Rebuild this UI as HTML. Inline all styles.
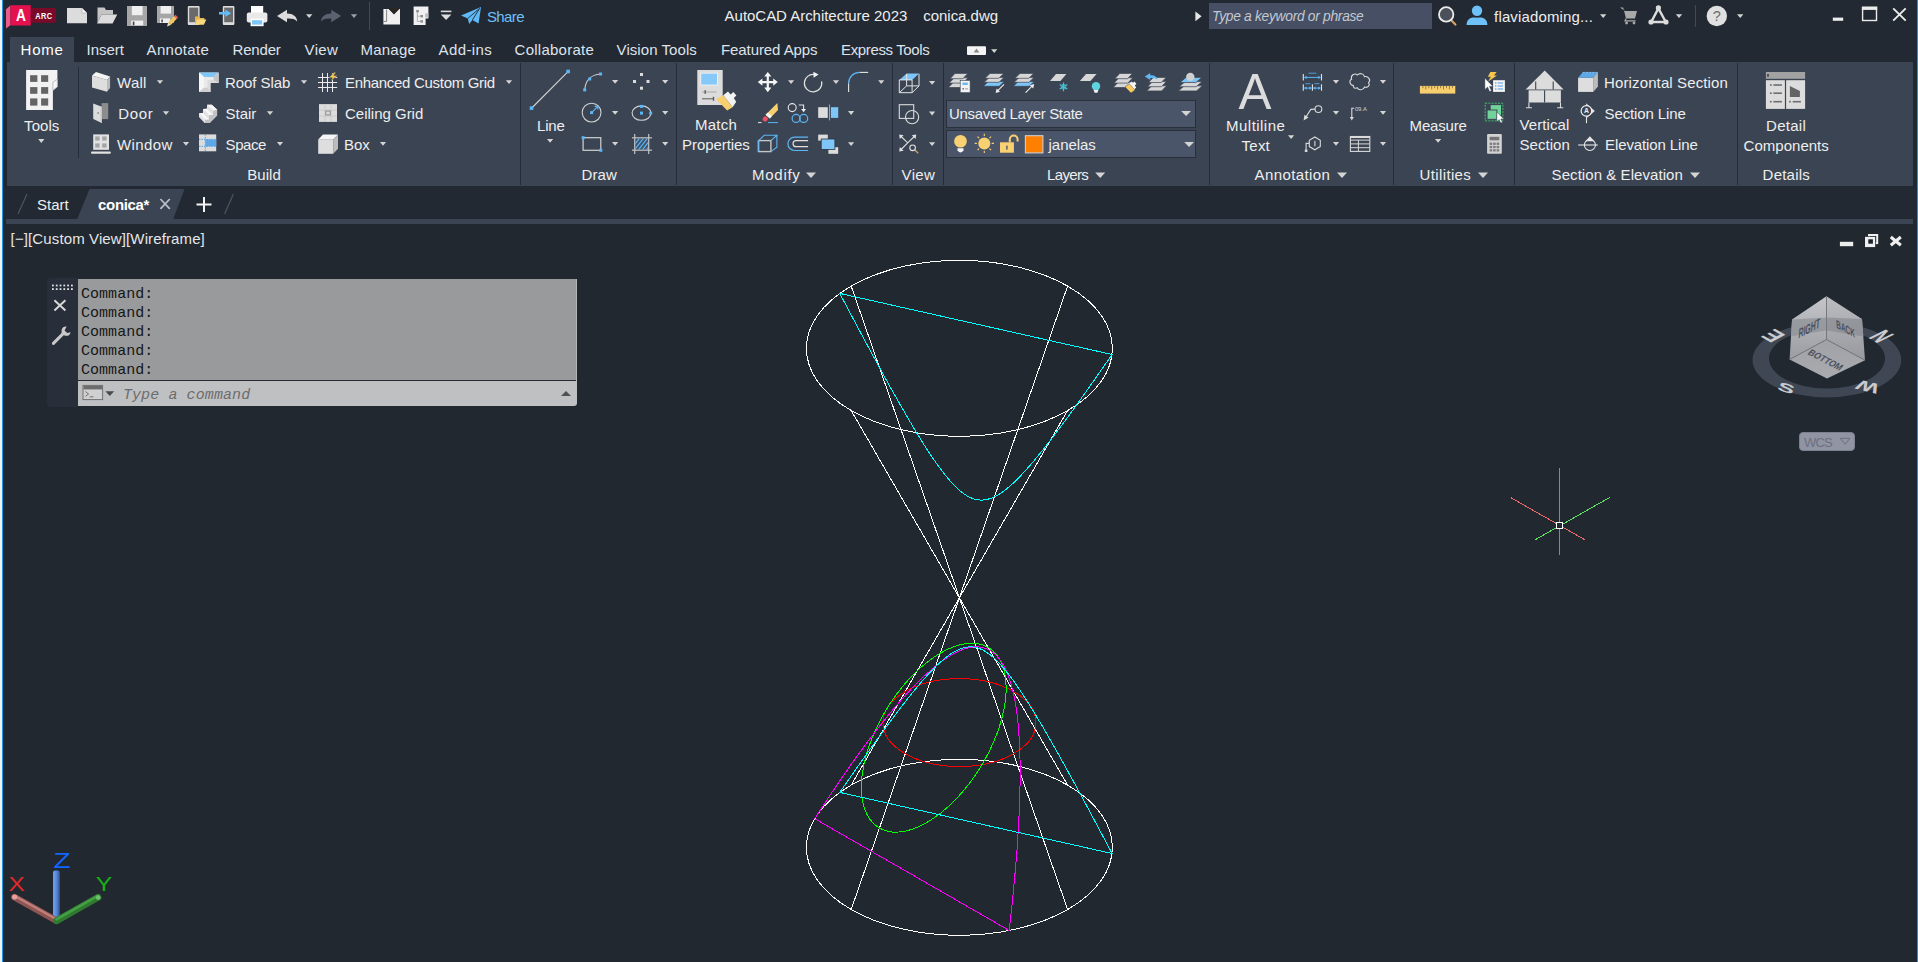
<!DOCTYPE html>
<html lang="en"><head><meta charset="utf-8"><title>AutoCAD Architecture 2023 - conica.dwg</title>
<style>
html,body{margin:0;padding:0;}
body{width:1918px;height:962px;overflow:hidden;background:#212830;position:relative;font-family:"Liberation Sans",sans-serif;}
.abs{position:absolute;}
.t{position:absolute;white-space:pre;line-height:normal;font-size:15px;}
#titlebar{left:3px;top:0;width:1914px;height:62px;background:#222933;}
#ribbon{left:7px;top:62px;width:1906px;height:124px;background:#3b4453;}
#hometab{left:10px;top:37px;width:64px;height:26px;background:#3b4453;}
#filetabs{left:3px;top:186px;width:1914px;height:33px;background:#222933;}
#tabbar{left:6px;top:219px;width:1907px;height:5px;background:#3b4453;}
#leftedge{left:0;top:0;width:2px;height:962px;background:#f3f3f3;}
#leftblue{left:2px;top:0;width:1.3px;height:962px;background:#1f96e0;}
#rightblue{left:1916.7px;top:0;width:1.3px;height:962px;background:#1896e0;}
#search{left:1209px;top:3px;width:223px;height:26px;background:#464f63;}
.sep{width:1px;background:#262c37;}
.dd{background:#4a5569;border:1px solid #2a303b;box-sizing:border-box;}
#cmdgrip{left:47px;top:278px;width:31px;height:129px;background:#282e3a;border-radius:4px 0 0 4px;}
#cmdhist{left:78px;top:279px;width:499px;height:102px;background:#999a9c;border-right:1px solid #b2b4b6;box-sizing:border-box;}
#cmdline{left:78px;top:379.7px;width:498px;height:1.3px;background:#252b35;}
#cmdin{left:78px;top:381px;width:499px;height:25px;background:#bfc0c2;border-radius:0 0 3px 0;}
#wcs{left:1799px;top:432px;width:56px;height:19px;background:#9094a3;border:1px solid #7c8090;border-radius:4px;box-sizing:border-box;}
svg{position:absolute;left:0;top:0;}
</style></head><body>
<div class="abs" id="titlebar"></div>
<div class="abs" id="hometab"></div>
<div class="abs" id="ribbon"></div>
<div class="abs" id="filetabs"></div>
<div class="abs" id="tabbar"></div>
<div class="abs" id="search"></div>
<div class="abs sep" style="left:520px;top:63px;height:122px;"></div>
<div class="abs sep" style="left:676px;top:63px;height:122px;"></div>
<div class="abs sep" style="left:892px;top:63px;height:122px;"></div>
<div class="abs sep" style="left:943px;top:63px;height:122px;"></div>
<div class="abs sep" style="left:1209px;top:63px;height:122px;"></div>
<div class="abs sep" style="left:1393px;top:63px;height:122px;"></div>
<div class="abs sep" style="left:1514px;top:63px;height:122px;"></div>
<div class="abs sep" style="left:1737px;top:63px;height:122px;"></div>
<div class="abs sep" style="left:78px;top:67px;height:91px;"></div>
<div class="abs dd" style="left:946px;top:100px;width:250px;height:28px;"></div>
<div class="abs dd" style="left:946px;top:130px;width:250px;height:28px;"></div>
<div class="abs" id="cmdgrip"></div><div class="abs" id="cmdhist"></div><div class="abs" id="cmdline"></div><div class="abs" id="cmdin"></div>
<div class="abs" id="wcs"></div>
<svg id="view" width="1918" height="962" viewBox="0 0 1918 962">
<g id="cones" shape-rendering="crispEdges">
<ellipse cx="959.4" cy="348.3" rx="153.0" ry="88.0" stroke="#ffffff" stroke-width="1" fill="none"/>
<ellipse cx="959.4" cy="847.3" rx="153.0" ry="88.0" stroke="#ffffff" stroke-width="1" fill="none"/>
<path d="M851.2,286.1 L1067.6,909.5" stroke="#ffffff" stroke-width="1" fill="none"/>
<path d="M1067.6,410.5 L851.2,785.1" stroke="#ffffff" stroke-width="1" fill="none"/>
<path d="M1067.6,286.1 L851.2,909.5" stroke="#ffffff" stroke-width="1" fill="none"/>
<path d="M851.2,410.5 L1067.6,785.1" stroke="#ffffff" stroke-width="1" fill="none"/>
<ellipse cx="959.4" cy="722.6" rx="76.5" ry="44.0" stroke="#ff0000" stroke-width="1" fill="none"/>
<path d="M988.0,647.4 L986.8,646.7 L985.5,646.1 L984.1,645.5 L982.7,645.0 L981.3,644.6 L979.9,644.2 L978.4,643.9 L976.9,643.6 L975.4,643.4 L973.8,643.3 L972.2,643.3 L970.6,643.3 L969.0,643.4 L967.3,643.5 L965.6,643.7 L963.9,644.0 L962.2,644.3 L960.4,644.7 L958.6,645.2 L956.8,645.7 L955.0,646.3 L953.2,647.0 L951.4,647.7 L949.6,648.5 L947.7,649.3 L945.8,650.2 L944.0,651.1 L942.1,652.2 L940.2,653.2 L938.3,654.4 L936.4,655.6 L934.5,656.8 L932.6,658.1 L930.7,659.5 L928.9,660.9 L927.0,662.3 L925.1,663.9 L923.2,665.4 L921.3,667.0 L919.5,668.7 L917.6,670.4 L915.8,672.2 L914.0,674.0 L912.1,675.8 L910.3,677.7 L908.6,679.6 L906.8,681.6 L905.0,683.6 L903.3,685.7 L901.6,687.7 L899.9,689.9 L898.3,692.0 L896.6,694.2 L895.0,696.4 L893.4,698.6 L891.9,700.9 L890.3,703.2 L888.8,705.5 L887.4,707.8 L885.9,710.2 L884.5,712.6 L883.2,715.0 L881.8,717.4 L880.5,719.8 L879.3,722.2 L878.0,724.7 L876.8,727.1 L875.7,729.6 L874.6,732.0 L873.5,734.5 L872.5,737.0 L871.5,739.4 L870.6,741.9 L869.7,744.4 L868.8,746.8 L868.0,749.3 L867.2,751.8 L866.5,754.2 L865.8,756.6 L865.2,759.0 L864.6,761.4 L864.1,763.8 L863.6,766.2 L863.2,768.5 L862.8,770.9 L862.4,773.2 L862.1,775.4 L861.9,777.7 L861.7,779.9 L861.6,782.1 L861.5,784.3 L861.4,786.4 L861.4,788.5 L861.5,790.6 L861.6,792.6 L861.7,794.6 L861.9,796.6 L862.2,798.5 L862.5,800.3 L862.8,802.2 L863.2,804.0 L863.7,805.7 L864.2,807.4 L864.7,809.0 L865.3,810.6 L866.0,812.2 L866.6,813.7 L867.4,815.1 L868.1,816.5 L869.0,817.8 L869.8,819.1 L870.7,820.3 L871.7,821.5 L872.7,822.6 L873.7,823.7 L874.8,824.7 L875.9,825.6 L877.1,826.5 L878.3,827.3 L879.5,828.0 L879.5,828.0 L880.8,828.7 L882.1,829.3 L883.4,829.9 L884.8,830.4 L886.2,830.8 L887.6,831.2 L889.1,831.5 L890.6,831.8 L892.2,832.0 L893.7,832.1 L895.3,832.1 L896.9,832.1 L898.6,832.0 L900.2,831.9 L901.9,831.7 L903.6,831.4 L905.4,831.1 L907.1,830.7 L908.9,830.2 L910.7,829.7 L912.5,829.1 L914.3,828.4 L916.1,827.7 L918.0,827.0 L919.8,826.1 L921.7,825.2 L923.6,824.3 L925.4,823.2 L927.3,822.2 L929.2,821.0 L931.1,819.8 L933.0,818.6 L934.9,817.3 L936.8,815.9 L938.7,814.5 L940.6,813.1 L942.5,811.5 L944.3,810.0 L946.2,808.4 L948.1,806.7 L949.9,805.0 L951.8,803.2 L953.6,801.4 L955.4,799.6 L957.2,797.7 L959.0,795.8 L960.7,793.8 L962.5,791.8 L964.2,789.7 L965.9,787.7 L967.6,785.5 L969.3,783.4 L970.9,781.2 L972.5,779.0 L974.1,776.8 L975.7,774.5 L977.2,772.2 L978.7,769.9 L980.2,767.6 L981.6,765.2 L983.0,762.8 L984.4,760.4 L985.7,758.0 L987.0,755.6 L988.3,753.2 L989.5,750.7 L990.7,748.3 L991.8,745.8 L993.0,743.4 L994.0,740.9 L995.0,738.4 L996.0,736.0 L997.0,733.5 L997.9,731.0 L998.7,728.6 L999.5,726.1 L1000.3,723.6 L1001.0,721.2 L1001.7,718.8 L1002.3,716.4 L1002.9,714.0 L1003.4,711.6 L1003.9,709.2 L1004.4,706.9 L1004.8,704.5 L1005.1,702.2 L1005.4,700.0 L1005.6,697.7 L1005.8,695.5 L1006.0,693.3 L1006.1,691.1 L1006.1,689.0 L1006.1,686.9 L1006.0,684.8 L1005.9,682.8 L1005.8,680.8 L1005.6,678.8 L1005.3,676.9 L1005.0,675.1 L1004.7,673.2 L1004.3,671.4 L1003.8,669.7 L1003.3,668.0 L1002.8,666.4 L1002.2,664.8 L1001.6,663.2 L1000.9,661.7 L1000.2,660.3 L999.4,658.9 L998.6,657.6 L997.7,656.3 L996.8,655.1 L995.8,653.9 L994.9,652.8 L993.8,651.7 L992.7,650.7 L991.6,649.8 L990.5,648.9 L989.3,648.1 L988.0,647.4 Z" stroke="#00ff00" stroke-width="1" fill="none"/>
<path d="M1009.2,930.5 L1010.1,922.2 L1011.0,914.0 L1011.9,905.9 L1012.7,897.9 L1013.5,890.0 L1014.2,882.3 L1014.9,874.7 L1015.6,867.3 L1016.2,859.9 L1016.8,852.7 L1017.3,845.6 L1017.7,838.6 L1018.2,831.8 L1018.6,825.0 L1018.9,818.4 L1019.2,812.0 L1019.5,805.6 L1019.7,799.4 L1019.9,793.3 L1020.0,787.3 L1020.1,781.5 L1020.1,775.7 L1020.1,770.1 L1020.1,764.6 L1020.0,759.3 L1019.9,754.1 L1019.7,749.0 L1019.5,744.0 L1019.2,739.1 L1018.9,734.4 L1018.6,729.8 L1018.2,725.3 L1017.8,720.9 L1017.3,716.7 L1016.8,712.6 L1016.2,708.6 L1015.6,704.8 L1015.0,701.0 L1014.3,697.4 L1013.5,693.9 L1012.8,690.6 L1011.9,687.3 L1011.1,684.2 L1010.2,681.2 L1009.2,678.4 L1008.2,675.6 L1007.2,673.0 L1006.1,670.5 L1005.0,668.2 L1003.8,665.9 L1002.6,663.8 L1001.4,661.8 L1000.1,659.9 L998.7,658.2 L997.3,656.6 L995.9,655.1 L994.4,653.7 L992.9,652.5 L991.4,651.4 L989.8,650.4 L988.1,649.5 L986.4,648.8 L984.7,648.1 L982.9,647.6 L981.1,647.3 L979.3,647.0 L977.4,646.9 L975.4,646.9 L973.4,647.0 L971.4,647.3 L969.3,647.7 L967.2,648.2 L965.1,648.8 L962.8,649.5 L960.6,650.4 L958.3,651.4 L956.0,652.5 L953.6,653.8 L951.2,655.1 L948.7,656.6 L946.2,658.3 L943.7,660.0 L941.1,661.9 L938.4,663.9 L935.7,666.0 L933.0,668.2 L930.3,670.6 L927.5,673.1 L924.6,675.7 L921.7,678.5 L918.8,681.3 L915.8,684.3 L912.8,687.4 L909.7,690.7 L906.6,694.0 L903.4,697.5 L900.2,701.2 L897.0,704.9 L893.7,708.8 L890.4,712.7 L887.0,716.9 L883.6,721.1 L880.1,725.5 L876.6,729.9 L873.1,734.6 L869.5,739.3 L865.9,744.1 L862.2,749.1 L858.5,754.2 L854.7,759.5 L850.9,764.8 L847.1,770.3 L843.2,775.9 L839.2,781.7 L835.3,787.5 L831.2,793.5 L827.2,799.6 L823.1,805.8 L818.9,812.2 L814.7,818.7 Z" stroke="#ff00ff" stroke-width="1" fill="none"/>
<path d="M839.8,293.4 L842.0,297.7 L844.3,302.0 L846.6,306.3 L848.8,310.6 L851.1,314.9 L853.4,319.1 L855.6,323.4 L857.9,327.6 L860.2,331.9 L862.5,336.1 L864.7,340.4 L867.0,344.6 L869.3,348.8 L871.5,353.0 L873.8,357.1 L876.1,361.3 L878.3,365.5 L880.6,369.6 L882.9,373.8 L885.1,377.9 L887.4,382.0 L889.7,386.1 L891.9,390.1 L894.2,394.2 L896.5,398.2 L898.8,402.2 L901.0,406.2 L903.3,410.1 L905.6,414.0 L907.8,417.9 L910.1,421.8 L912.4,425.6 L914.6,429.4 L916.9,433.2 L919.2,436.9 L921.4,440.6 L923.7,444.2 L926.0,447.8 L928.2,451.3 L930.5,454.7 L932.8,458.1 L935.1,461.4 L937.3,464.6 L939.6,467.8 L941.9,470.8 L944.1,473.8 L946.4,476.6 L948.7,479.3 L950.9,481.9 L953.2,484.4 L955.5,486.7 L957.7,488.8 L960.0,490.8 L962.3,492.6 L964.5,494.3 L966.8,495.7 L969.1,497.0 L971.4,498.0 L973.6,498.8 L975.9,499.4 L978.2,499.8 L980.4,500.0 L982.7,500.0 L985.0,499.8 L987.2,499.4 L989.5,498.7 L991.8,498.0 L994.0,497.0 L996.3,495.8 L998.6,494.5 L1000.8,493.1 L1003.1,491.5 L1005.4,489.8 L1007.7,488.0 L1009.9,486.1 L1012.2,484.1 L1014.5,481.9 L1016.7,479.7 L1019.0,477.4 L1021.3,475.1 L1023.5,472.6 L1025.8,470.1 L1028.1,467.6 L1030.3,465.0 L1032.6,462.3 L1034.9,459.7 L1037.1,456.9 L1039.4,454.1 L1041.7,451.3 L1044.0,448.5 L1046.2,445.6 L1048.5,442.7 L1050.8,439.7 L1053.0,436.8 L1055.3,433.8 L1057.6,430.8 L1059.8,427.8 L1062.1,424.7 L1064.4,421.7 L1066.6,418.6 L1068.9,415.5 L1071.2,412.4 L1073.5,409.2 L1075.7,406.1 L1078.0,402.9 L1080.3,399.8 L1082.5,396.6 L1084.8,393.4 L1087.1,390.2 L1089.3,387.0 L1091.6,383.8 L1093.9,380.6 L1096.1,377.3 L1098.4,374.1 L1100.7,370.8 L1102.9,367.6 L1105.2,364.3 L1107.5,361.1 L1109.8,357.8 L1112.0,354.5 Z" stroke="#00ffff" stroke-width="1" fill="none"/>
<path d="M839.8,792.4 L842.0,789.2 L844.3,785.9 L846.6,782.6 L848.8,779.4 L851.1,776.1 L853.4,772.9 L855.6,769.6 L857.9,766.4 L860.2,763.2 L862.5,759.9 L864.7,756.7 L867.0,753.5 L869.3,750.3 L871.5,747.2 L873.8,744.0 L876.1,740.9 L878.3,737.7 L880.6,734.6 L882.9,731.5 L885.1,728.4 L887.4,725.3 L889.7,722.2 L891.9,719.2 L894.2,716.1 L896.5,713.1 L898.8,710.2 L901.0,707.2 L903.3,704.3 L905.6,701.4 L907.8,698.5 L910.1,695.6 L912.4,692.8 L914.6,690.0 L916.9,687.3 L919.2,684.6 L921.4,681.9 L923.7,679.3 L926.0,676.8 L928.2,674.3 L930.5,671.9 L932.8,669.5 L935.1,667.2 L937.3,665.0 L939.6,662.9 L941.9,660.9 L944.1,658.9 L946.4,657.1 L948.7,655.4 L950.9,653.8 L953.2,652.4 L955.5,651.1 L957.7,650.0 L960.0,649.0 L962.3,648.2 L964.5,647.6 L966.8,647.2 L969.1,646.9 L971.4,646.9 L973.6,647.1 L975.9,647.5 L978.2,648.1 L980.4,648.9 L982.7,650.0 L985.0,651.2 L987.2,652.7 L989.5,654.3 L991.8,656.1 L994.0,658.1 L996.3,660.3 L998.6,662.6 L1000.8,665.0 L1003.1,667.6 L1005.4,670.3 L1007.7,673.2 L1009.9,676.1 L1012.2,679.2 L1014.5,682.3 L1016.7,685.5 L1019.0,688.8 L1021.3,692.2 L1023.5,695.7 L1025.8,699.2 L1028.1,702.7 L1030.3,706.4 L1032.6,710.0 L1034.9,713.7 L1037.1,717.5 L1039.4,721.3 L1041.7,725.1 L1044.0,729.0 L1046.2,732.9 L1048.5,736.8 L1050.8,740.8 L1053.0,744.8 L1055.3,748.8 L1057.6,752.8 L1059.8,756.8 L1062.1,760.9 L1064.4,765.0 L1066.6,769.1 L1068.9,773.2 L1071.2,777.3 L1073.5,781.5 L1075.7,785.6 L1078.0,789.8 L1080.3,794.0 L1082.5,798.2 L1084.8,802.4 L1087.1,806.6 L1089.3,810.8 L1091.6,815.1 L1093.9,819.3 L1096.1,823.5 L1098.4,827.8 L1100.7,832.1 L1102.9,836.3 L1105.2,840.6 L1107.5,844.9 L1109.8,849.2 L1112.0,853.5 Z" stroke="#00ffff" stroke-width="1" fill="none"/>
</g>
<g id="crosshair" shape-rendering="crispEdges">
<line x1="1559.5" y1="467.7" x2="1559.5" y2="555" stroke="#7a7af2" stroke-width="1"/>
<line x1="1510.6" y1="497.5" x2="1584.8" y2="539.7" stroke="#e86a6a" stroke-width="1"/>
<line x1="1535.3" y1="539.7" x2="1609.6" y2="497.5" stroke="#5fe05f" stroke-width="1"/>
<rect x="1556.5" y="522.5" width="6" height="6" fill="#212830" stroke="#ffffff" stroke-width="1"/>
</g>
<g id="ucs">
<defs><linearGradient id="gz" x1="0" x2="1" y1="0" y2="0"><stop offset="0" stop-color="#6d9fe8"/><stop offset="0.45" stop-color="#5b8fe0"/><stop offset="1" stop-color="#33549a"/></linearGradient></defs>
<rect x="53" y="870.6" width="6.8" height="48" rx="2" fill="url(#gz)"/>
<line x1="56.4" y1="920.6" x2="14.4" y2="897.2" stroke="#8f5552" stroke-width="6.6" stroke-linecap="round"/>
<line x1="56.0" y1="919.0" x2="14.8" y2="896.0" stroke="#c07f7b" stroke-width="2.4" stroke-linecap="round"/>
<circle cx="14.6" cy="897" r="2.6" fill="#e9a09c"/>
<line x1="56.6" y1="920.8" x2="98" y2="897.4" stroke="#2f7a2f" stroke-width="6.8" stroke-linecap="round"/>
<line x1="56.4" y1="919.4" x2="97.4" y2="896.2" stroke="#45a045" stroke-width="2.6" stroke-linecap="round"/>
<circle cx="98.2" cy="897.6" r="2.4" fill="#6cbf6c"/>
<text transform="translate(53.4 868.2) scale(1.25 1)" font-size="22.4" fill="#1166ff" font-family="Liberation Sans, sans-serif">Z</text>
<text transform="translate(8.6 891.2) scale(1.16 1)" font-size="21" fill="#e02828" font-family="Liberation Sans, sans-serif">X</text>
<text transform="translate(95.8 891.2) scale(1.17 1)" font-size="21" fill="#18b018" font-family="Liberation Sans, sans-serif">Y</text>
</g>
<g id="viewcube">
<path fill-rule="evenodd" fill="#3f4755" d="M1752.5,360 a74.4,37.4 0 1 0 148.8,0 a74.4,37.4 0 1 0 -148.8,0 Z M1769,358.6 a58,30 0 1 0 116,0 a58,30 0 1 0 -116,0 Z"/>
<defs><linearGradient id="cf1" x1="0" y1="0" x2="0" y2="1"><stop offset="0" stop-color="#c4c6ca"/><stop offset="1" stop-color="#9a9ca1"/></linearGradient><linearGradient id="cf2" x1="0" y1="0" x2="0" y2="1"><stop offset="0" stop-color="#bbbdc1"/><stop offset="1" stop-color="#97999e"/></linearGradient><linearGradient id="cf3" x1="0" y1="0" x2="0" y2="1"><stop offset="0" stop-color="#9fa1a6"/><stop offset="1" stop-color="#a9abaf"/></linearGradient></defs>
<polygon points="1826.5,296.3 1792.0,319.6 1789.6,359.5 1826.5,339.5" fill="url(#cf1)" />
<polygon points="1826.5,296.3 1862.0,318.9 1865.0,360.2 1826.5,339.5" fill="url(#cf2)" />
<polygon points="1826.5,339.5 1789.6,359.5 1827.0,378.4 1865.0,360.2" fill="url(#cf3)" />
<polygon points="1792.0,319.6 1826.5,317.6 1826.5,330.6 1791.0,336.2" fill="#8e9197" opacity="0.75"/>
<polygon points="1826.5,317.6 1862.0,318.9 1863.4,336.4 1826.5,330.6" fill="#8b8e94" opacity="0.75"/>
<path d="M1826.5,296.3 L1826.5,339.5 M1826.5,339.5 L1789.6,359.5 M1826.5,339.5 L1865.0,360.2" stroke="#6e7278" stroke-width="0.8" fill="none"/>
<text font-family="Liberation Sans, sans-serif" font-weight="bold" fill="#4b5160" font-size="10" transform="matrix(0.691,-0.36,-0.098,1.369,1798.2,338.5)">RIGHT</text>
<text font-family="Liberation Sans, sans-serif" font-weight="bold" fill="#4b5160" font-size="10" transform="matrix(0.647,0.339,0.091,1.173,1836.5,327.8)">BACK</text>
<text font-family="Liberation Sans, sans-serif" font-weight="bold" fill="#4b5160" font-size="10" transform="matrix(0.755,0.388,-0.656,0.712,1807.1,354)">BOTTOM</text>
<text font-family="Liberation Sans, sans-serif" font-weight="bold" fill="#c9cbcf" font-size="10" transform="matrix(-1.86,-1.07,2.09,-1.12,1786.6,335.6)">E</text>
<text font-family="Liberation Sans, sans-serif" font-weight="bold" fill="#c9cbcf" font-size="10" transform="matrix(1.42,0.86,-2.49,1.24,1867.8,337.5)">N</text>
<text font-family="Liberation Sans, sans-serif" font-weight="bold" fill="#c9cbcf" font-size="10" transform="matrix(2.4,0.75,-0.5,1.15,1776.5,389.5)">S</text>
<text font-family="Liberation Sans, sans-serif" font-weight="bold" fill="#c9cbcf" font-size="10" transform="matrix(-2.3,-0.55,0.7,-1.3,1880.9,384.8)">W</text>
</g>
</svg>
<svg id="icons" width="1918" height="962" viewBox="0 0 1918 962" font-family="Liberation Sans, sans-serif">
<g id="tb-icons">
<polygon points="6.0,9.2 10.4,5.5 10.4,25.2 6.0,28.4" fill="#ea5c8b" />
<rect x="10.4" y="5.2" width="20.4" height="20.3" fill="#e5114f" />
<rect x="30.8" y="8.0" width="25.2" height="14.8" fill="#7a0a28" />
<text x="0.0" y="0.0" font-size="15.6" fill="#ffffff" font-weight="bold" transform="translate(16.1 20.6) scale(0.88 1)">A</text>
<text x="0.0" y="0.0" font-size="9.2" fill="#ffffff" font-weight="bold" letter-spacing="0.5" transform="translate(35.2 19) scale(0.8 1)">ARC</text>
<polygon points="67.0,8.0 82.0,8.0 87.0,13.0 87.0,23.3 67.0,23.3" fill="#dcdcdc" />
<polygon points="82.0,8.0 87.0,13.0 82.0,13.0" fill="#f8f8f8" stroke="#9a9a9a" stroke-width="0.5"/>
<polygon points="97.5,7.5 104.5,7.5 106.0,10.0 113.0,10.0 113.0,14.5 101.5,14.5 97.5,22.5" fill="#c4c4c4" />
<polygon points="101.6,14.4 117.2,14.4 112.6,23.6 97.0,23.6" fill="#dcdcdc" />
<rect x="127.0" y="6.0" width="20.0" height="20.0" fill="#a6a6a6" />
<rect x="131.8" y="6.0" width="10.8" height="9.2" fill="#efefef" />
<rect x="131.2" y="20.6" width="12.0" height="4.7" fill="#efefef" />
<rect x="132.8" y="21.6" width="1.6" height="3.6" fill="#3c3c3c" />
<rect x="157.0" y="6.0" width="17.0" height="17.0" fill="#a6a6a6" />
<rect x="160.6" y="6.0" width="10.4" height="7.6" fill="#efefef" />
<rect x="160.0" y="18.4" width="10.0" height="4.6" fill="#efefef" />
<rect x="161.4" y="19.4" width="1.4" height="3.0" fill="#3c3c3c" />
<polygon points="168.2,22.6 174.2,16.0 177.0,18.6 170.8,25.0" fill="#f2c45f" />
<polygon points="168.2,22.6 170.8,25.0 167.0,26.4" fill="#e8e0d0" />
<polygon points="174.2,16.0 175.4,14.8 178.2,17.4 177.0,18.6" fill="#ef5a5a" />
<rect x="187.8" y="6.0" width="11.8" height="19.0" fill="#dcdcdc" rx="1"/>
<rect x="189.2" y="7.6" width="9.0" height="14.6" fill="#6a6a6a" />
<polygon points="195.0,16.6 199.0,16.6 200.0,18.0 204.4,18.0 204.4,20.0 195.0,24.6" fill="#e8b84e" />
<polygon points="197.4,19.6 206.4,19.6 203.8,24.8 195.0,24.8" fill="#fbd77e" />
<rect x="222.8" y="6.0" width="11.6" height="19.0" fill="#dcdcdc" rx="1"/>
<rect x="224.2" y="7.6" width="8.8" height="14.6" fill="#6a6a6a" />
<polygon points="219.0,11.9 225.4,11.9 225.4,9.4 231.2,13.2 225.4,17.0 225.4,14.5 219.0,14.5" fill="#5fbcf7" />
<rect x="251.0" y="6.0" width="12.2" height="7.0" fill="#ffffff" />
<rect x="246.8" y="12.6" width="20.6" height="9.8" fill="#e9e9e9" rx="2"/>
<rect x="250.6" y="18.6" width="13.0" height="7.6" fill="#ffffff" />
<rect x="252.0" y="20.2" width="10.2" height="4.4" fill="#7dc6f7" />
<path d="M277,16 L287,9.8 L287,13.4 C293,13.4 297,16.5 297.2,21.4 C294.8,18.8 291.5,18.3 287,18.5 L287,22.2 Z" stroke="none" stroke-width="1" fill="#dcdcdc" />
<polygon points="306.0,14.2 312.4,14.2 309.2,18.0" fill="#d4d4d4" />
<path d="M341.2,16 L331.2,9.8 L331.2,13.4 C325.2,13.4 321.2,16.5 321,21.4 C323.4,18.8 326.7,18.3 331.2,18.5 L331.2,22.2 Z" stroke="none" stroke-width="1" fill="#5b626f" />
<polygon points="350.8,14.2 357.2,14.2 354.0,18.0" fill="#9aa0aa" />
<line x1="369.5" y1="2.0" x2="369.5" y2="30.0" stroke="#3c4a63" stroke-width="1" />
<path d="M383.4,9 L388.6,9 L394,14.6 L399.4,9 L400,9 L400,24.6 L383.4,24.6 Z" stroke="none" stroke-width="1" fill="#f0f0f0" />
<path d="M388.2,8 L399.8,8 L394,13.8 Z" stroke="none" stroke-width="1" fill="#2b2622" />
<path d="M383.6,21.4 L386.6,21.4 L386.6,9.6" stroke="#555" stroke-width="0.7" fill="none" />
<path d="M413.6,6.4 L428.4,6.4 L428.4,18.6 L425.6,18.6 L425.6,25 L413.6,25 Z" stroke="none" stroke-width="1" fill="#f0f0f0" />
<rect x="416.2" y="10.0" width="2.6" height="2.4" fill="#8c8c8c" />
<rect x="420.4" y="15.0" width="2.6" height="2.4" fill="#8c8c8c" />
<rect x="420.4" y="20.2" width="2.6" height="2.4" fill="#8c8c8c" />
<path d="M417.4,12.4 L417.4,21.4 L420.4,21.4 M417.4,16.2 L420.4,16.2" stroke="#9a9a9a" stroke-width="0.7" fill="none" />
<rect x="425.2" y="13.4" width="3.2" height="4.0" fill="#bcbcbc" />
<rect x="440.8" y="10.6" width="10.6" height="1.6" fill="#dcdcdc" />
<polygon points="440.8,14.4 451.4,14.4 446.1,20.0" fill="#dcdcdc" />
<polygon points="461.0,15.6 481.0,7.0 478.6,23.4 472.4,20.0 469.2,24.0 467.8,18.4" fill="#5eb9f6" />
<path d="M467.8,18.4 L479.6,8.4 M472.4,20 L479.6,8.4" stroke="#222933" stroke-width="0.9" fill="none" />
<polygon points="1195.4,11.4 1201.6,16.3 1195.4,21.2" fill="#e6e6e6" />
<line x1="1451.0" y1="20.0" x2="1455.4" y2="24.6" stroke="#d9a066" stroke-width="2.2" stroke-linecap="round"/>
<circle cx="1446.2" cy="14.4" r="7.2" stroke="#ececec" stroke-width="1.8" fill="#4a505a" />
<circle cx="1477.0" cy="10.8" r="5.2" stroke="none" stroke-width="1" fill="#6ec0f8" />
<path d="M1466.6,25 C1466.6,19 1471,16.4 1477,17.8 C1483,16.4 1487.4,19 1487.4,25 Z" stroke="none" stroke-width="1" fill="#6ec0f8" />
<polygon points="1600.0,14.2 1606.4,14.2 1603.2,18.0" fill="#d4d4d4" />
<path d="M1620,7.6 L1623.2,7.6 L1626,18.6 L1635,18.6 L1637,11 L1625,11 Z" stroke="none" stroke-width="1" fill="#a9a9a9" />
<path d="M1626,18.6 L1625,20.8 L1635.6,20.8" stroke="#a9a9a9" stroke-width="1.2" fill="none" />
<circle cx="1626.6" cy="23.0" r="1.4" stroke="none" stroke-width="1" fill="#a9a9a9" />
<circle cx="1634.0" cy="23.0" r="1.4" stroke="none" stroke-width="1" fill="#a9a9a9" />
<path d="M1658.4,8.4 L1651.2,22 L1665.8,22 Z" stroke="#dcdcdc" stroke-width="2.4" fill="none" stroke-linejoin="round"/>
<circle cx="1658.4" cy="7.8" r="2.6" stroke="none" stroke-width="1" fill="#dcdcdc" />
<circle cx="1651.0" cy="22.0" r="2.6" stroke="none" stroke-width="1" fill="#dcdcdc" />
<circle cx="1666.0" cy="22.0" r="2.6" stroke="none" stroke-width="1" fill="#dcdcdc" />
<polygon points="1675.8,14.2 1682.2,14.2 1679.0,18.0" fill="#d4d4d4" />
<line x1="1695.5" y1="5.0" x2="1695.5" y2="27.0" stroke="#3c4a63" stroke-width="1" />
<circle cx="1716.8" cy="16.0" r="10.2" stroke="none" stroke-width="1" fill="#e0e0e0" />
<text x="1712.8" y="21.2" font-size="14.5" fill="#6e6e6e" >?</text>
<polygon points="1737.0,14.2 1743.4,14.2 1740.2,18.0" fill="#d4d4d4" />
<rect x="1832.8" y="17.6" width="10.4" height="3.2" fill="#ececec" />
<rect x="1862.6" y="7.4" width="13.9" height="13.1" fill="none" stroke="#ececec" stroke-width="1.4"/>
<rect x="1861.9" y="6.7" width="15.3" height="3.2" fill="#ececec" />
<path d="M1893.2,8.4 L1905.7,20.6 M1905.7,8.4 L1893.2,20.6" stroke="#ececec" stroke-width="1.9" fill="none" />
<rect x="967.0" y="46.2" width="19.0" height="8.8" fill="#f4f4f4" rx="1"/>
<polygon points="973.6,52.4 979.4,52.4 976.5,48.4" fill="#8a8a8a" />
<polygon points="991.1,49.2 997.3,49.2 994.2,53.0" fill="#d4d4d4" />
</g>
<g id="build">
<polygon points="26.1,70.1 57.4,70.1 57.4,86.8 52.9,90.4 52.9,110.0 26.1,110.0" fill="#f2f2f2" />
<polygon points="52.9,82.3 57.4,79.2 57.4,86.8 52.9,90.4" fill="#f6f6f6" stroke="#a8a8a8" stroke-width="0.7"/>
<rect x="30.1" y="75.2" width="7.3" height="6.7" fill="#646464" />
<rect x="30.1" y="87.1" width="7.3" height="6.7" fill="#646464" />
<rect x="30.1" y="98.4" width="7.3" height="7.2" fill="#646464" />
<rect x="41.1" y="75.2" width="7.1" height="6.7" fill="#646464" />
<rect x="41.1" y="87.1" width="7.1" height="6.7" fill="#646464" />
<rect x="41.1" y="98.4" width="7.1" height="7.2" fill="#646464" />
<polygon points="38.2,139.1 44.4,139.1 41.3,142.9" fill="#d4d4d4" />
<polygon points="92.0,75.5 96.0,72.0 110.1,76.5 107.0,80.0" fill="#f4f4f4" />
<polygon points="92.0,75.5 107.0,80.0 107.0,91.7 92.0,87.5" fill="#dedede" />
<polygon points="107.0,80.0 110.1,76.5 110.1,88.0 107.0,91.7" fill="#bababa" />
<polygon points="156.9,80.2 163.1,80.2 160.0,84.0" fill="#d4d4d4" />
<rect x="101.6" y="103.1" width="6.6" height="16.0" fill="#8c8c8c" />
<polygon points="93.2,103.4 101.8,106.7 101.8,122.9 93.2,118.9" fill="#dcdcdc" />
<polygon points="100.6,106.2 101.8,106.7 101.8,122.9 100.6,122.4" fill="#c4c4c4" />
<rect x="97.6" y="112.0" width="1.0" height="2.0" fill="#777" />
<polygon points="162.9,111.2 169.1,111.2 166.0,115.0" fill="#d4d4d4" />
<rect x="93.2" y="134.4" width="15.8" height="15.4" fill="#e2e2e2" />
<rect x="95.2" y="136.4" width="4.4" height="4.2" fill="#a4a4a4" />
<rect x="95.2" y="143.4" width="4.4" height="4.2" fill="#a4a4a4" />
<rect x="102.2" y="136.4" width="4.4" height="4.2" fill="#a4a4a4" />
<rect x="102.2" y="143.4" width="4.4" height="4.2" fill="#a4a4a4" />
<rect x="91.0" y="151.6" width="19.8" height="2.2" fill="#e2e2e2" rx="1"/>
<polygon points="182.9,142.0 189.1,142.0 186.0,145.8" fill="#d4d4d4" />
<polygon points="199.0,72.5 218.7,72.5 218.7,83.0 210.7,83.0 210.7,92.0 199.0,92.0" fill="#dcdcdc" />
<polygon points="199.0,72.5 204.3,77.0 204.3,87.5 199.0,92.0" fill="#f6f6f6" />
<polygon points="199.0,92.0 204.3,87.5 207.0,87.5 210.7,92.0" fill="#cfcfcf" />
<polygon points="204.3,77.0 213.7,77.0 213.7,80.0 207.4,80.0 207.4,87.5 204.3,87.5" fill="#ebebeb" />
<polygon points="218.7,72.5 213.7,77.0 213.7,80.0 218.7,83.0" fill="#c4c4c4" />
<polygon points="199.6,72.5 218.1,72.5 213.7,77.0 204.3,77.0" fill="#7dc6f7" />
<polygon points="300.9,80.2 307.1,80.2 304.0,84.0" fill="#d4d4d4" />
<polygon points="199.0,113.3 202.9,113.1 203.0,108.9 206.9,108.8 207.1,104.7 211.8,104.7 217.1,109.5 217.1,115.5 209.6,122.9 204.6,122.9 199.0,117.0" fill="#e2e2e2" />
<polygon points="205.1,119.5 209.0,119.4 209.1,115.1 213.0,115.0 213.2,110.5 217.1,109.7 217.1,115.5 209.7,122.9 204.9,122.9" fill="#c2c2c2" />
<polygon points="207.1,104.7 211.8,104.7 217.1,109.7 213.2,110.5" fill="#f6f6f6" />
<polygon points="203.0,108.9 206.9,108.8 213.0,115.0 209.1,115.1" fill="#f6f6f6" />
<polygon points="199.0,113.3 202.9,113.1 209.0,119.4 205.1,119.5" fill="#f6f6f6" />
<polygon points="266.9,111.2 273.1,111.2 270.0,115.0" fill="#d4d4d4" />
<rect x="199.0" y="134.4" width="17.2" height="16.9" fill="#dcdcdc" />
<rect x="205.3" y="139.4" width="10.9" height="6.9" fill="#5fa8e8" />
<line x1="205.3" y1="134.4" x2="205.3" y2="151.3" stroke="#4aa0ee" stroke-width="0.9" stroke-dasharray="1.5 1"/>
<line x1="199.0" y1="139.4" x2="216.2" y2="139.4" stroke="#4aa0ee" stroke-width="0.9" stroke-dasharray="1.5 1"/>
<line x1="199.0" y1="146.3" x2="216.2" y2="146.3" stroke="#4aa0ee" stroke-width="0.9" stroke-dasharray="1.5 1"/>
<polygon points="276.9,142.0 283.1,142.0 280.0,145.8" fill="#d4d4d4" />
<line x1="318.0" y1="77.5" x2="337.2" y2="77.5" stroke="#ececec" stroke-width="1" />
<line x1="318.0" y1="82.5" x2="337.2" y2="82.5" stroke="#ececec" stroke-width="1" />
<line x1="318.0" y1="87.5" x2="337.2" y2="87.5" stroke="#ececec" stroke-width="1" />
<line x1="322.5" y1="73.0" x2="322.5" y2="92.0" stroke="#ececec" stroke-width="1" />
<line x1="327.5" y1="73.0" x2="327.5" y2="92.0" stroke="#ececec" stroke-width="1" />
<line x1="332.5" y1="73.0" x2="332.5" y2="92.0" stroke="#ececec" stroke-width="1" />
<polygon points="334.2,72.2 329.0,77.4 332.4,77.6 330.6,81.2 337.6,75.6 333.8,75.4 336.0,72.4" fill="#f8c64e" stroke="#3b4453" stroke-width="0.5"/>
<polygon points="505.9,80.2 512.1,80.2 509.0,84.0" fill="#d4d4d4" />
<rect x="319.0" y="104.1" width="18.0" height="17.8" fill="#dcdcdc" />
<line x1="325.0" y1="104.1" x2="325.0" y2="121.9" stroke="#c6c6c6" stroke-width="0.8" />
<line x1="331.0" y1="104.1" x2="331.0" y2="121.9" stroke="#c6c6c6" stroke-width="0.8" />
<line x1="319.0" y1="110.1" x2="337.0" y2="110.1" stroke="#c6c6c6" stroke-width="0.8" />
<line x1="319.0" y1="116.0" x2="337.0" y2="116.0" stroke="#c6c6c6" stroke-width="0.8" />
<rect x="325.8" y="111.0" width="4.4" height="4.0" fill="none" stroke="#8a8a8a" stroke-width="1"/>
<rect x="318.2" y="139.4" width="15.0" height="14.4" fill="#dedede" />
<polygon points="318.2,139.4 323.0,134.4 338.0,134.4 333.2,139.4" fill="#f6f6f6" />
<polygon points="333.2,139.4 338.0,134.4 338.0,148.8 333.2,153.8" fill="#bcbcbc" />
<polygon points="379.9,142.0 386.1,142.0 383.0,145.8" fill="#d4d4d4" />
</g>
<g id="draw">
<line x1="531.8" y1="108.0" x2="568.0" y2="71.6" stroke="#d2d2d2" stroke-width="1.1" />
<rect x="529.7" y="106.3" width="3.6" height="3.6" fill="#5cb6f5" />
<rect x="566.3" y="69.7" width="3.6" height="3.6" fill="#5cb6f5" />
<polygon points="547.0,139.0 553.2,139.0 550.1,142.8" fill="#d4d4d4" />
<path d="M584.7,89.9 C585.4,80.6 591,74.6 600.6,74" stroke="#d2d2d2" stroke-width="1.1" fill="none" />
<rect x="583.2" y="88.4" width="3.0" height="3.0" fill="#5cb6f5" />
<rect x="588.2" y="77.5" width="3.0" height="3.0" fill="#5cb6f5" />
<rect x="599.1" y="72.5" width="3.0" height="3.0" fill="#5cb6f5" />
<polygon points="612.0,80.0 618.2,80.0 615.1,83.8" fill="#d4d4d4" />
<rect x="640.0" y="73.0" width="3.0" height="3.0" fill="#dcdcdc" />
<rect x="633.0" y="80.0" width="3.0" height="3.0" fill="#dcdcdc" />
<rect x="646.5" y="80.0" width="3.0" height="3.0" fill="#dcdcdc" />
<rect x="640.0" y="86.7" width="3.0" height="3.0" fill="#dcdcdc" />
<polygon points="662.1,80.0 668.3,80.0 665.2,83.8" fill="#d4d4d4" />
<circle cx="591.6" cy="112.6" r="9.4" stroke="#d2d2d2" stroke-width="1.1" fill="none" />
<rect x="590.1" y="111.1" width="3.0" height="3.0" fill="#5cb6f5" />
<path d="M592.6,111.6 L597.4,106.8 M594.6,106.4 L597.9,106.4 L597.9,109.6" stroke="#5cb6f5" stroke-width="1.1" fill="none" />
<polygon points="612.0,111.0 618.2,111.0 615.1,114.8" fill="#d4d4d4" />
<ellipse cx="641.5" cy="113.1" rx="9.4" ry="7.2" stroke="#d2d2d2" stroke-width="1.1" fill="none" />
<rect x="640.0" y="111.6" width="3.0" height="3.0" fill="#5cb6f5" />
<rect x="640.0" y="104.9" width="3.0" height="3.0" fill="#5cb6f5" />
<rect x="649.2" y="111.6" width="3.0" height="3.0" fill="#5cb6f5" />
<polygon points="662.1,111.0 668.3,111.0 665.2,114.8" fill="#d4d4d4" />
<rect x="583.1" y="137.7" width="17.7" height="12.6" fill="none" stroke="#d2d2d2" stroke-width="1.2"/>
<rect x="581.6" y="136.2" width="3.0" height="3.0" fill="#5cb6f5" />
<rect x="599.3" y="148.8" width="3.0" height="3.0" fill="#5cb6f5" />
<polygon points="612.0,141.9 618.2,141.9 615.1,145.7" fill="#d4d4d4" />
<clipPath id="hc"><rect x="635.4" y="138.6" width="12.6" height="10.8"/></clipPath>
<rect x="635.4" y="138.6" width="12.6" height="10.8" fill="#3f556e" />
<path d="M626.5,149.8 L635.5,138.2 M630.5,149.8 L639.5,138.2 M634.5,149.8 L643.5,138.2 M638.5,149.8 L647.5,138.2 M642.5,149.8 L651.5,138.2 M646.5,149.8 L655.5,138.2 " stroke="#5cb6f5" stroke-width="1.2" fill="none" clip-path="url(#hc)"/>
<line x1="634.7" y1="134.0" x2="634.7" y2="154.0" stroke="#c4c4c4" stroke-width="1.2" />
<line x1="648.7" y1="134.0" x2="648.7" y2="154.0" stroke="#c4c4c4" stroke-width="1.2" />
<line x1="632.0" y1="137.8" x2="652.0" y2="137.8" stroke="#c4c4c4" stroke-width="1.2" />
<line x1="632.0" y1="150.2" x2="652.0" y2="150.2" stroke="#c4c4c4" stroke-width="1.2" />
<polygon points="662.1,141.9 668.3,141.9 665.2,145.7" fill="#d4d4d4" />
</g>
<g id="modify">
<rect x="697.3" y="70.0" width="25.4" height="35.0" fill="#dcdcdc" />
<rect x="700.4" y="72.8" width="17.4" height="12.6" fill="#f4f4f4" />
<rect x="701.2" y="73.6" width="15.8" height="11.0" fill="#84c9f8" />
<line x1="702.0" y1="92.0" x2="716.7" y2="92.0" stroke="#a8a8a8" stroke-width="1" />
<rect x="704.4" y="90.2" width="1.6" height="3.6" fill="#6a6a6a" />
<line x1="702.0" y1="98.8" x2="714.0" y2="98.8" stroke="#5a5a5a" stroke-width="1" />
<rect x="712.8" y="96.8" width="1.4" height="4.0" fill="#5a5a5a" />
<polygon points="723.2,95.2 728.0,91.6 730.6,94.6 733.4,92.0 736.4,95.4 733.8,98.0 736.2,101.8 732.6,107.2" fill="#f2f2f2" />
<polygon points="716.1,99.0 723.2,95.2 732.6,107.2 727.1,110.4" fill="#f8cf6e" />
<path d="M767.8,72 L771.4,76.6 L768.9,76.6 L768.9,81 L773.2,81 L773.2,78.5 L777.8,82.1 L773.2,85.7 L773.2,83.2 L768.9,83.2 L768.9,87.6 L771.4,87.6 L767.8,92.2 L764.2,87.6 L766.7,87.6 L766.7,83.2 L762.4,83.2 L762.4,85.7 L757.8,82.1 L762.4,78.5 L762.4,81 L766.7,81 L766.7,76.6 L764.2,76.6 Z" stroke="none" stroke-width="1" fill="#f6f6f6" />
<polygon points="788.0,80.2 794.2,80.2 791.1,84.0" fill="#d4d4d4" />
<path d="M814.6,74.6 A8.7,8.7 0 1 0 821.6,81.4" stroke="#e2e2e2" stroke-width="1.2" fill="none" />
<polygon points="813.4,71.8 818.6,74.6 813.6,77.8" fill="#f2f2f2" />
<polygon points="832.9,80.2 839.1,80.2 836.0,84.0" fill="#d4d4d4" />
<path d="M848.6,92 L848.6,83.2" stroke="#e6e6e6" stroke-width="1.1" fill="none" />
<path d="M848.6,83.2 A11,11 0 0 1 859.6,72.4" stroke="#5cb6f5" stroke-width="1.2" fill="none" />
<path d="M859.6,72.4 L868.2,72.4" stroke="#e6e6e6" stroke-width="1.1" fill="none" />
<polygon points="878.1,80.2 884.3,80.2 881.2,84.0" fill="#d4d4d4" />
<polygon points="777.4,102.9 778.0,110.0 769.8,118.4 765.6,114.8" fill="#f8cf6e" />
<polygon points="768.0,112.4 772.0,116.0 769.8,118.4 765.6,114.8" fill="#f4f4f4" />
<ellipse cx="765.2" cy="119.0" rx="2.6" ry="2.4" stroke="none" stroke-width="1" fill="#f0506a" transform="rotate(-45 765.2 119)"/>
<line x1="758.0" y1="122.6" x2="761.6" y2="122.6" stroke="#e6e6e6" stroke-width="1" />
<line x1="768.1" y1="122.6" x2="778.0" y2="122.6" stroke="#5cb6f5" stroke-width="1" />
<circle cx="792.2" cy="107.6" r="4.0" stroke="#e6e6e6" stroke-width="1.1" fill="none" />
<path d="M798.8,105 L803.6,105 L803.6,110.4" stroke="#e6e6e6" stroke-width="1.1" fill="none" />
<polygon points="801.2,109.0 806.0,109.0 803.6,112.2" fill="#f2f2f2" />
<circle cx="796.1" cy="118.4" r="4.0" stroke="#5cb6f5" stroke-width="1.2" fill="none" />
<circle cx="803.7" cy="118.4" r="4.0" stroke="#5cb6f5" stroke-width="1.2" fill="none" />
<rect x="818.2" y="107.2" width="9.6" height="10.7" fill="#dcdcdc" />
<rect x="830.9" y="107.2" width="7.3" height="10.7" fill="#7dc6f7" />
<line x1="829.5" y1="104.5" x2="829.5" y2="120.4" stroke="#5cb6f5" stroke-width="1.1" />
<polygon points="848.0,111.1 854.2,111.1 851.1,114.9" fill="#d4d4d4" />
<rect x="758.6" y="140.6" width="12.3" height="11.0" fill="none" stroke="#c6c6c6" stroke-width="1.4"/>
<path d="M758.6,140.6 L764.3,135.2 L776.9,135.2 L770.9,140.6 M776.9,135.2 L776.9,147.2 L770.9,151.6 M758.2,140.2 L758.2,152" stroke="#5cb6f5" stroke-width="1.1" fill="none" />
<path d="M808.1,137.1 L794.6,137.1 A6.7,6.7 0 0 0 794.6,150.5 L808.1,150.5" stroke="#5cb6f5" stroke-width="1.2" fill="none" />
<path d="M808.1,140.6 L796.1,140.6 A3.05,3.05 0 0 0 796.1,146.7 L808.1,146.7" stroke="#e0e0e0" stroke-width="1.2" fill="none" />
<rect x="818.2" y="134.6" width="9.6" height="6.0" fill="#dcdcdc" />
<rect x="828.4" y="147.2" width="9.8" height="6.6" fill="#dcdcdc" />
<rect x="821.2" y="139.0" width="13.7" height="10.4" fill="#7dc6f7" stroke="#2c3440" stroke-width="0.8"/>
<polygon points="848.0,142.3 854.2,142.3 851.1,146.1" fill="#d4d4d4" />
<polygon points="806.0,172.6 816.0,172.6 811.0,178.0" fill="#d4d4d4" />
</g>
<g id="viewp">
<polygon points="899.3,79.9 906.6,73.6 919.0,73.6 912.1,79.9" fill="#7dc6f7" />
<path d="M899.3,79.9 L912.1,79.9 L912.1,92.7 L899.3,92.7 Z M919,73.8 L919,85.9 L912.1,92.7 M906.6,74 L906.6,85.9 L899.3,92.7 M906.6,85.9 L919,85.9" stroke="#e4e4e4" stroke-width="1" fill="none" />
<polygon points="929.0,81.0 935.2,81.0 932.1,84.8" fill="#d4d4d4" />
<rect x="899.3" y="104.7" width="14.4" height="13.7" fill="none" stroke="#dadada" stroke-width="1.1"/>
<circle cx="912.1" cy="117.1" r="6.6" stroke="#dadada" stroke-width="1.1" fill="none" />
<polygon points="929.0,111.6 935.2,111.6 932.1,115.4" fill="#d4d4d4" />
<path d="M900.6,136 L907.7,142.8 L914.8,136 M907.7,142.8 L900.6,150" stroke="#e0e0e0" stroke-width="1.1" fill="none" />
<polygon points="899.2,134.6 903.6,135.2 899.8,139.0" fill="#e0e0e0" />
<polygon points="916.2,134.6 911.8,135.2 915.6,139.0" fill="#e0e0e0" />
<polygon points="899.2,151.4 903.6,150.8 899.8,147.0" fill="#e0e0e0" />
<line x1="914.6" y1="149.8" x2="918.2" y2="153.2" stroke="#d9a066" stroke-width="1.3" />
<circle cx="912.6" cy="147.8" r="2.8" stroke="#e6e6e6" stroke-width="1.1" fill="#3b4453" />
<polygon points="929.0,142.3 935.2,142.3 932.1,146.1" fill="#d4d4d4" />
</g>
<g id="layers">
<polygon points="948.4,87.5 953.4,82.2 968.2,82.2 963.2,87.5" fill="#d6d6d6" stroke="#3b4453" stroke-width="0.7"/>
<polygon points="949.2,83.1 954.2,77.8 968.0,77.8 963.0,83.1" fill="#d6d6d6" stroke="#3b4453" stroke-width="0.7"/>
<polygon points="950.0,78.7 955.0,73.4 967.8,73.4 962.8,78.7" fill="#d6d6d6" stroke="#3b4453" stroke-width="0.7"/>
<rect x="960.2" y="80.4" width="9.9" height="12.3" fill="#f4f4f4" stroke="#3b4453" stroke-width="0.6"/>
<rect x="962.4" y="82.6" width="5.4" height="2.4" fill="#6ab8f2" />
<rect x="962.4" y="88.0" width="1.6" height="1.6" fill="#7a7a7a" />
<rect x="965.0" y="88.4" width="3.0" height="1.0" fill="#9a9a9a" />
<polygon points="983.4,86.3 988.4,81.4 1004.2,81.4 999.2,86.3" fill="#7dc6f7" stroke="#3b4453" stroke-width="0.7"/>
<polygon points="984.2,82.3 989.2,77.4 1004.0,77.4 999.0,82.3" fill="#d6d6d6" stroke="#3b4453" stroke-width="0.7"/>
<polygon points="985.0,78.3 990.0,73.4 1003.8,73.4 998.8,78.3" fill="#d6d6d6" stroke="#3b4453" stroke-width="0.7"/>
<line x1="1004.0" y1="84.3" x2="997.6" y2="90.8" stroke="#eeeeee" stroke-width="1.1" />
<polygon points="995.6,92.9 996.6,88.4 1000.0,91.8" fill="#eeeeee" />
<polygon points="1013.4,86.3 1018.4,81.4 1034.2,81.4 1029.2,86.3" fill="#7dc6f7" stroke="#3b4453" stroke-width="0.7"/>
<polygon points="1014.2,82.3 1019.2,77.4 1034.0,77.4 1029.0,82.3" fill="#d6d6d6" stroke="#3b4453" stroke-width="0.7"/>
<polygon points="1015.0,78.3 1020.0,73.4 1033.8,73.4 1028.8,78.3" fill="#d6d6d6" stroke="#3b4453" stroke-width="0.7"/>
<line x1="1025.6" y1="92.6" x2="1032.0" y2="86.2" stroke="#eeeeee" stroke-width="1.1" />
<polygon points="1034.2,84.0 1033.2,88.6 1029.8,85.2" fill="#eeeeee" />
<polygon points="1050.0,81.0 1056.0,74.1 1066.4,74.1 1060.4,81.0" fill="#d6d6d6" />
<path d="M1063.5,91.2 L1063.5,82.4 M1059.7,89.0 L1067.3,84.6 M1059.7,84.6 L1067.3,89.0 " stroke="#48c2d6" stroke-width="1.1" fill="none" />
<circle cx="1063.5" cy="86.8" r="2.4" stroke="#48c2d6" stroke-width="0.9" fill="none" />
<polygon points="1079.9,81.0 1086.0,74.1 1096.6,74.1 1090.4,81.0" fill="#d6d6d6" />
<circle cx="1096.0" cy="86.2" r="4.2" stroke="none" stroke-width="1" fill="#5fd2de" />
<polygon points="1093.6,90.0 1098.4,90.0 1097.4,92.8 1094.6,92.8" fill="#f2f2f2" />
<polygon points="1113.2,87.5 1118.2,82.2 1133.0,82.2 1128.0,87.5" fill="#d6d6d6" stroke="#3b4453" stroke-width="0.7"/>
<polygon points="1114.0,83.1 1119.0,77.8 1132.8,77.8 1127.8,83.1" fill="#d6d6d6" stroke="#3b4453" stroke-width="0.7"/>
<polygon points="1114.8,78.7 1119.8,73.4 1132.5,73.4 1127.5,78.7" fill="#d6d6d6" stroke="#3b4453" stroke-width="0.7"/>
<polygon points="1125.0,87.0 1129.4,83.6 1135.2,90.0 1131.0,93.0" fill="#f6c85e" stroke="#3b4453" stroke-width="0.5"/>
<polygon points="1129.4,83.6 1131.6,81.4 1133.0,82.8 1134.6,81.6 1136.4,84.0 1134.8,85.4 1136.2,87.6 1134.4,89.2" fill="#f4f4f4" />
<polygon points="1146.8,90.9 1151.8,85.8 1166.6,85.8 1161.6,90.9" fill="#d6d6d6" stroke="#3b4453" stroke-width="0.7"/>
<polygon points="1147.6,86.7 1152.6,81.6 1166.4,81.6 1161.4,86.7" fill="#d6d6d6" stroke="#3b4453" stroke-width="0.7"/>
<polygon points="1148.4,82.5 1153.4,77.4 1166.2,77.4 1161.2,82.5" fill="#d6d6d6" stroke="#3b4453" stroke-width="0.7"/>
<path d="M1144.8,76.4 L1150.2,73 L1150.2,75.2 C1154.4,74.8 1157,76.6 1157.6,79.6 C1155.4,78.2 1153.4,77.8 1150.2,78 L1150.2,80 Z" stroke="none" stroke-width="1" fill="#5fb4f2" />
<polygon points="1178.4,90.9 1184.4,85.8 1202.4,85.8 1196.4,90.9" fill="#d6d6d6" stroke="#3b4453" stroke-width="0.7"/>
<polygon points="1179.2,86.7 1185.2,81.6 1202.1,81.6 1196.1,86.7" fill="#d6d6d6" stroke="#3b4453" stroke-width="0.7"/>
<polygon points="1180.0,82.5 1186.0,77.4 1201.9,77.4 1195.9,82.5" fill="#7dc6f7" stroke="#3b4453" stroke-width="0.7"/>
<circle cx="1190.3" cy="76.9" r="4.2" stroke="none" stroke-width="1" fill="#d0d0d0" />
<polygon points="1181.2,111.1 1191.0,111.1 1186.1,116.1" fill="#d4d4d4" />
<polygon points="1184.2,142.0 1194.0,142.0 1189.1,147.0" fill="#d4d4d4" />
<circle cx="960.5" cy="141.2" r="6.3" stroke="none" stroke-width="1" fill="#f9d173" />
<path d="M957.5,148.2 L963.5,148.2 L963.5,150.6 Q960.5,154.4 957.5,150.6 Z" stroke="none" stroke-width="1" fill="#f4f4f4" />
<circle cx="984.3" cy="143.4" r="6.0" stroke="none" stroke-width="1" fill="#f9d173" />
<path d="M991.7,143.4 L993.9,143.4 M989.5,148.6 L991.1,150.2 M984.3,150.8 L984.3,153.0 M979.1,148.6 L977.5,150.2 M976.9,143.4 L974.7,143.4 M979.1,138.2 L977.5,136.6 M984.3,136.0 L984.3,133.8 M989.5,138.2 L991.1,136.6 " stroke="#f9d173" stroke-width="1.1" fill="none" />
<rect x="1000.0" y="142.3" width="13.9" height="10.4" fill="#f9d173" />
<path d="M1009.8,142.3 L1009.8,139.4 A3.9,3.9 0 0 1 1017.6,139.4 L1017.6,141.6" stroke="#f9d173" stroke-width="2" fill="none" />
<rect x="1006.2" y="145.6" width="1.4" height="4.0" fill="#4d586c" />
<rect x="1025.4" y="135.7" width="17.5" height="17.2" fill="#ff7f00" stroke="#cfcfcf" stroke-width="1.1"/>
<polygon points="1095.2,172.6 1105.2,172.6 1100.2,178.0" fill="#d4d4d4" />
</g>
<g id="annotation">
<polygon points="1288.0,135.2 1294.2,135.2 1291.1,139.0" fill="#d4d4d4" />
<path d="M1303.3,74.1 L1303.3,80.4 M1321.5,74.1 L1321.5,80.4 M1303.3,84.3 L1303.3,90.8 M1312.4,84.3 L1312.4,90.8 M1321.5,84.3 L1321.5,90.8" stroke="#e2e2e2" stroke-width="1.1" fill="none" />
<path d="M1304.4,77.4 L1320.4,77.4 M1304.4,88.1 L1311.4,88.1 M1313.4,88.1 L1320.4,88.1" stroke="#5cb6f5" stroke-width="1" fill="none" />
<polygon points="1304.0,77.4 1306.6,75.8 1306.6,79.0" fill="#5cb6f5" />
<polygon points="1320.8,77.4 1318.2,75.8 1318.2,79.0" fill="#5cb6f5" />
<polygon points="1304.0,88.1 1306.6,86.5 1306.6,89.7" fill="#5cb6f5" />
<polygon points="1311.8,88.1 1309.2,86.5 1309.2,89.7" fill="#5cb6f5" />
<polygon points="1313.0,88.1 1315.6,86.5 1315.6,89.7" fill="#5cb6f5" />
<polygon points="1320.8,88.1 1318.2,86.5 1318.2,89.7" fill="#5cb6f5" />
<line x1="1308.6" y1="73.2" x2="1316.3" y2="73.2" stroke="#4f9fdc" stroke-width="1" />
<line x1="1305.4" y1="83.7" x2="1310.4" y2="83.7" stroke="#4f9fdc" stroke-width="1" />
<line x1="1314.4" y1="83.7" x2="1319.4" y2="83.7" stroke="#4f9fdc" stroke-width="1" />
<polygon points="1332.9,80.0 1339.1,80.0 1336.0,83.8" fill="#d4d4d4" />
<path d="M1353.4,85.6 C1349.4,85 1349,80.2 1351.6,79.2 C1350.2,75.2 1354.6,72.6 1357.4,75 C1359.6,72.6 1364,73.6 1364.4,76.6 C1368.4,76 1371.2,79.8 1368.6,82.6 C1370.4,85.6 1367.4,88.4 1364.6,87 C1363.4,90.4 1358.4,90.6 1357.2,87.8 C1355.2,88.8 1353,87.8 1353.4,85.6 Z" stroke="#dadada" stroke-width="1.1" fill="none" />
<polygon points="1379.9,80.0 1386.1,80.0 1383.0,83.8" fill="#d4d4d4" />
<circle cx="1318.4" cy="109.1" r="3.4" stroke="#dadada" stroke-width="1.1" fill="none" />
<path d="M1315,109.1 L1310.8,109.4 L1305.8,117.2" stroke="#dadada" stroke-width="1.1" fill="none" />
<polygon points="1303.6,120.4 1304.4,114.8 1308.6,117.6" fill="#dadada" />
<polygon points="1332.9,111.0 1339.1,111.0 1336.0,114.8" fill="#d4d4d4" />
<path d="M1354.2,108.3 L1351.8,108.3 L1351.8,117.6" stroke="#dadada" stroke-width="1.1" fill="none" />
<polygon points="1349.8,117.0 1353.8,117.0 1351.8,120.4" fill="#dadada" />
<text x="1354.9" y="110.6" font-size="5.8" fill="#d4d4d4" >09.A</text>
<polygon points="1379.9,111.0 1386.1,111.0 1383.0,114.8" fill="#d4d4d4" />
<polygon points="1320.3,146.6 1314.8,149.8 1309.3,146.6 1309.3,140.2 1314.8,137.0 1320.3,140.2" fill="none" stroke="#dadada" stroke-width="1.1"/>
<line x1="1314.9" y1="140.8" x2="1314.9" y2="146.2" stroke="#dadada" stroke-width="1.1" />
<path d="M1309.2,143.4 L1306.1,143.4 L1306.1,149.6" stroke="#dadada" stroke-width="1.1" fill="none" />
<rect x="1304.8" y="149.4" width="2.6" height="2.6" fill="#dadada" />
<polygon points="1332.9,141.9 1339.1,141.9 1336.0,145.7" fill="#d4d4d4" />
<rect x="1350.4" y="136.5" width="19.4" height="14.9" fill="none" stroke="#dadada" stroke-width="1.1"/>
<path d="M1350.4,140.1 L1369.8,140.1 M1350.4,143.9 L1369.8,143.9 M1350.4,147.7 L1369.8,147.7 M1358.4,140.1 L1358.4,151.4" stroke="#dadada" stroke-width="1" fill="none" />
<line x1="1350.4" y1="137.2" x2="1369.8" y2="137.2" stroke="#dadada" stroke-width="1.6" />
<polygon points="1379.9,141.9 1386.1,141.9 1383.0,145.7" fill="#d4d4d4" />
<polygon points="1337.0,172.6 1347.0,172.6 1342.0,178.0" fill="#d4d4d4" />
</g>
<g id="utilities">
<rect x="1419.9" y="85.9" width="35.4" height="7.7" fill="#f8cf6e" />
<path d="M1422.9,85.9 L1422.9,88.2 M1425.8,85.9 L1425.8,89.4 M1428.8,85.9 L1428.8,88.2 M1431.7,85.9 L1431.7,89.4 M1434.7,85.9 L1434.7,88.2 M1437.6,85.9 L1437.6,89.4 M1440.6,85.9 L1440.6,88.2 M1443.5,85.9 L1443.5,89.4 M1446.5,85.9 L1446.5,88.2 M1449.4,85.9 L1449.4,89.4 M1452.4,85.9 L1452.4,88.2 " stroke="#7a6a3a" stroke-width="0.8" fill="none" />
<polygon points="1435.0,139.0 1441.2,139.0 1438.1,142.8" fill="#d4d4d4" />
<polygon points="1490.4,71.9 1496.6,71.9 1494.0,75.4 1497.0,75.4 1488.2,81.4 1490.8,76.8 1487.8,76.8" fill="#f8c64e" />
<rect x="1493.1" y="80.2" width="11.8" height="11.7" fill="#f4f4f4" />
<rect x="1495.0" y="82.4" width="1.4" height="1.2" fill="#4f9fe6" />
<line x1="1497.6" y1="83.0" x2="1503.0" y2="83.0" stroke="#4f9fe6" stroke-width="1" />
<rect x="1495.0" y="85.4" width="1.4" height="1.2" fill="#4f9fe6" />
<line x1="1497.6" y1="86.0" x2="1503.0" y2="86.0" stroke="#4f9fe6" stroke-width="1" />
<rect x="1495.0" y="88.4" width="1.4" height="1.2" fill="#4f9fe6" />
<line x1="1497.6" y1="89.0" x2="1503.0" y2="89.0" stroke="#4f9fe6" stroke-width="1" />
<polygon points="1484.9,78.2 1484.9,89.4 1487.6,87.0 1489.6,91.6 1491.4,90.8 1489.4,86.4 1492.8,86.2" fill="#ffffff" stroke="#3b4453" stroke-width="0.4"/>
<rect x="1490.7" y="105.1" width="10.3" height="9.8" fill="#72d39a" />
<rect x="1487.1" y="110.0" width="9.8" height="9.3" fill="#72d39a" stroke="#3b4453" stroke-width="0.9"/>
<rect x="1485.2" y="103.2" width="17.7" height="17.7" fill="none" stroke="#3fbf6e" stroke-width="1" stroke-dasharray="2 1.2"/>
<polygon points="1496.9,112.2 1496.9,121.6 1499.2,119.6 1500.8,123.0 1502.4,122.2 1500.8,119.0 1503.6,118.8" fill="#ffffff" stroke="#3b4453" stroke-width="0.4"/>
<rect x="1487.1" y="134.1" width="14.7" height="19.7" fill="#d2d2d2" rx="0.8"/>
<rect x="1489.6" y="136.8" width="9.7" height="3.5" fill="#747474" />
<rect x="1489.6" y="142.6" width="2.6" height="2.3" fill="#7c7c7c" />
<rect x="1493.1" y="142.6" width="2.6" height="2.3" fill="#7c7c7c" />
<rect x="1496.6" y="142.6" width="2.6" height="2.3" fill="#7c7c7c" />
<rect x="1489.6" y="145.9" width="2.6" height="2.3" fill="#7c7c7c" />
<rect x="1493.1" y="145.9" width="2.6" height="2.3" fill="#7c7c7c" />
<rect x="1496.6" y="145.9" width="2.6" height="2.3" fill="#7c7c7c" />
<rect x="1489.6" y="149.2" width="2.6" height="2.3" fill="#7c7c7c" />
<rect x="1493.1" y="149.2" width="2.6" height="2.3" fill="#7c7c7c" />
<rect x="1496.6" y="149.2" width="2.6" height="2.3" fill="#7c7c7c" />
<polygon points="1478.0,172.6 1488.0,172.6 1483.0,178.0" fill="#d4d4d4" />
</g>
<g id="section">
<polygon points="1544.7,70.6 1563.6,89.4 1525.6,89.4" fill="#dcdcdc" />
<rect x="1528.6" y="90.3" width="32.3" height="12.2" fill="#dcdcdc" />
<path d="M1535.7,81.5 L1535.7,89.4 M1553.2,81.5 L1553.2,89.4 M1544.6,90.3 L1544.6,102.5" stroke="#3b4453" stroke-width="1.1" fill="none" />
<path d="M1528.9,102.5 L1528.9,107.6 M1560.5,102.5 L1560.5,107.6 M1525.9,107.8 L1531.9,107.8 M1557.1,107.8 L1563.3,107.8" stroke="#dcdcdc" stroke-width="1.1" fill="none" />
<rect x="1578.1" y="77.7" width="15.1" height="14.2" fill="#dedede" />
<polygon points="1578.1,77.7 1582.8,72.2 1597.9,72.2 1593.2,77.7" fill="#5fa8e8" />
<path d="M1582.8,72.4 L1597.9,72.4" stroke="#8fd0ff" stroke-width="0.8" fill="none" stroke-dasharray="2 1.2"/>
<polygon points="1593.2,77.7 1597.9,72.2 1597.9,86.4 1593.2,91.9" fill="#bcbcbc" />
<polygon points="1586.1,103.2 1594.9,110.9 1586.1,118.4" fill="#e2e2e2" />
<circle cx="1586.4" cy="110.9" r="5.3" stroke="#efefef" stroke-width="1.2" fill="#3b4453" />
<text x="1583.9" y="113.4" font-size="6.8" fill="#f0f0f0" font-weight="bold">A</text>
<line x1="1586.5" y1="116.4" x2="1586.5" y2="123.2" stroke="#e6e6e6" stroke-width="1.1" />
<polygon points="1585.4,141.2 1589.9,136.2 1594.4,141.2" fill="#e6e6e6" />
<circle cx="1589.9" cy="145.0" r="5.5" stroke="#e6e6e6" stroke-width="1.1" fill="none" />
<line x1="1578.2" y1="145.0" x2="1597.8" y2="145.0" stroke="#e6e6e6" stroke-width="1.1" />
<polygon points="1690.0,172.6 1700.0,172.6 1695.0,178.0" fill="#d4d4d4" />
</g>
<g id="details">
<rect x="1765.9" y="72.0" width="39.2" height="6.8" fill="#a2a2a2" />
<rect x="1767.1" y="74.0" width="1.8" height="2.8" fill="#4a4a4a" />
<rect x="1765.9" y="80.2" width="19.0" height="28.7" fill="#dcdcdc" />
<rect x="1786.1" y="80.2" width="19.0" height="28.7" fill="#dcdcdc" />
<rect x="1769.9" y="84.2" width="1.8" height="1.6" fill="#6e6e6e" />
<rect x="1773.4" y="84.2" width="8.5" height="1.6" fill="#6e6e6e" />
<rect x="1769.9" y="92.4" width="1.8" height="1.6" fill="#6e6e6e" />
<rect x="1773.4" y="92.4" width="8.5" height="1.6" fill="#6e6e6e" />
<rect x="1769.9" y="100.9" width="1.8" height="1.6" fill="#6e6e6e" />
<rect x="1773.4" y="100.9" width="8.5" height="1.6" fill="#6e6e6e" />
<polygon points="1789.9,86.0 1799.9,91.0 1799.9,97.0 1789.9,97.0" fill="#646464" />
<rect x="1789.1" y="100.9" width="1.8" height="1.6" fill="#6e6e6e" />
<rect x="1792.7" y="100.9" width="8.2" height="1.6" fill="#6e6e6e" />
</g>
<g id="filetabs-i">
<polygon points="89.5,189.0 184.6,189.0 173.2,219.0 77.3,219.0" fill="#3b4453" />
<line x1="27.0" y1="194.0" x2="18.0" y2="214.0" stroke="#4c5566" stroke-width="1.2" />
<line x1="233.4" y1="194.0" x2="224.6" y2="214.0" stroke="#4c5566" stroke-width="1.2" />
<path d="M160.4,199 L169.8,208.8 M169.8,199 L160.4,208.8" stroke="#b9bec8" stroke-width="1.8" fill="none" />
<path d="M204,197 L204,212 M196.5,204.5 L211.5,204.5" stroke="#f4f4f4" stroke-width="2" fill="none" />
</g>
<g id="vpctl">
<rect x="1839.9" y="241.8" width="13.3" height="4.4" fill="#ececec" />
<rect x="1869.0" y="235.0" width="8.2" height="8.1" fill="none" stroke="#f0f0f0" stroke-width="2"/>
<rect x="1864.4" y="236.2" width="11.4" height="11.5" fill="#1b212a" />
<rect x="1865.0" y="236.8" width="10.2" height="10.3" fill="#f0f0f0" />
<rect x="1868.3" y="239.3" width="4.6" height="4.4" fill="#1b212a" />
<path d="M1890.8,237 L1900.8,245.2 M1900.8,237 L1890.8,245.2" stroke="#f0f0f0" stroke-width="3.1" fill="none" />
</g>
<g id="cmd-i">
<rect x="52.0" y="284.6" width="1.8" height="1.8" fill="#e2e2e2" />
<rect x="55.8" y="284.6" width="1.8" height="1.8" fill="#e2e2e2" />
<rect x="59.6" y="284.6" width="1.8" height="1.8" fill="#e2e2e2" />
<rect x="63.4" y="284.6" width="1.8" height="1.8" fill="#e2e2e2" />
<rect x="67.2" y="284.6" width="1.8" height="1.8" fill="#e2e2e2" />
<rect x="71.0" y="284.6" width="1.8" height="1.8" fill="#e2e2e2" />
<rect x="52.0" y="288.2" width="1.8" height="1.8" fill="#e2e2e2" />
<rect x="55.8" y="288.2" width="1.8" height="1.8" fill="#e2e2e2" />
<rect x="59.6" y="288.2" width="1.8" height="1.8" fill="#e2e2e2" />
<rect x="63.4" y="288.2" width="1.8" height="1.8" fill="#e2e2e2" />
<rect x="67.2" y="288.2" width="1.8" height="1.8" fill="#e2e2e2" />
<rect x="71.0" y="288.2" width="1.8" height="1.8" fill="#e2e2e2" />
<path d="M54.4,300.2 L65.4,310.6 M65.4,300.2 L54.4,310.6" stroke="#d6d6d6" stroke-width="2" fill="none" />
<path d="M53.4,343.4 L63.4,333.4" stroke="#c9c9c9" stroke-width="3" fill="none" stroke-linecap="round"/>
<path d="M66.6,326.6 A4.6,4.6 0 1 0 70.6,332.2 L67.2,333 L64.6,330.6 Z" stroke="none" stroke-width="1" fill="#c9c9c9" />
<rect x="83.0" y="385.4" width="19.6" height="14.2" fill="#d0d0d0" stroke="#707070" stroke-width="1"/>
<rect x="83.5" y="385.9" width="18.6" height="3.5" fill="#6c6c6c" />
<path d="M85.4,391.6 L88.6,394 L85.4,396.4 M89.6,396.8 L93.4,396.8" stroke="#6a6a6a" stroke-width="0.9" fill="none" />
<polygon points="105.4,391.2 114.2,391.2 109.8,396.0" fill="#4a4a4a" />
<polygon points="561.0,396.0 571.0,396.0 566.0,391.0" fill="#505050" />
</g>
<g id="wcs-i">
<path d="M1840.2,438.4 L1850,438.4 L1845.1,444.2 Z" stroke="#6c7180" stroke-width="1" fill="none" />
</g>
</svg>
<span class="t " id="t1" style="left:486.9px;top:8.42px;font-size:15px;color:#6ec0f8;letter-spacing:-0.583px;">Share</span>
<span class="t " id="t2" style="left:724.6px;top:7.42px;font-size:15px;color:#eeeeee;letter-spacing:-0.031px;">AutoCAD Architecture 2023</span>
<span class="t " id="t3" style="left:923.2px;top:7.42px;font-size:15px;color:#eeeeee;letter-spacing:-0.016px;">conica.dwg</span>
<span class="t " id="t4" style="left:1212.1px;top:8.51px;font-size:13.8px;color:#c3c8d2;font-style:italic;letter-spacing:-0.295px;">Type a keyword or phrase</span>
<span class="t " id="t5" style="left:1494.1px;top:8.42px;font-size:15px;color:#eeeeee;letter-spacing:0.142px;">flaviadoming...</span>
<span class="t " id="t6" style="left:20.6px;top:41.12px;font-size:15px;color:#ffffff;letter-spacing:0.728px;">Home</span>
<span class="t " id="t7" style="left:86.6px;top:41.12px;font-size:15px;color:#dfe3ea;letter-spacing:-0.063px;">Insert</span>
<span class="t " id="t8" style="left:146.6px;top:41.12px;font-size:15px;color:#dfe3ea;letter-spacing:0.305px;">Annotate</span>
<span class="t " id="t9" style="left:232.6px;top:41.12px;font-size:15px;color:#dfe3ea;letter-spacing:-0.201px;">Render</span>
<span class="t " id="t10" style="left:304.6px;top:41.12px;font-size:15px;color:#dfe3ea;letter-spacing:0.317px;">View</span>
<span class="t " id="t11" style="left:360.6px;top:41.12px;font-size:15px;color:#dfe3ea;letter-spacing:0.196px;">Manage</span>
<span class="t " id="t12" style="left:438.6px;top:41.12px;font-size:15px;color:#dfe3ea;letter-spacing:0.390px;">Add-ins</span>
<span class="t " id="t13" style="left:514.6px;top:41.12px;font-size:15px;color:#dfe3ea;letter-spacing:0.248px;">Collaborate</span>
<span class="t " id="t14" style="left:616.6px;top:41.12px;font-size:15px;color:#dfe3ea;letter-spacing:0.064px;">Vision Tools</span>
<span class="t " id="t15" style="left:721.0px;top:41.12px;font-size:15px;color:#dfe3ea;letter-spacing:-0.082px;">Featured Apps</span>
<span class="t " id="t16" style="left:841.1px;top:41.12px;font-size:15px;color:#dfe3ea;letter-spacing:-0.367px;">Express Tools</span>
<span class="t " id="t17" style="left:24.1px;top:117.42px;font-size:15px;color:#eeeeee;letter-spacing:0.042px;">Tools</span>
<span class="t " id="t18" style="left:117.1px;top:74.12px;font-size:15px;color:#eeeeee;letter-spacing:0.197px;">Wall</span>
<span class="t " id="t19" style="left:118.3px;top:105.12px;font-size:15px;color:#eeeeee;letter-spacing:0.661px;">Door</span>
<span class="t " id="t20" style="left:117.1px;top:136.23px;font-size:15px;color:#eeeeee;letter-spacing:0.368px;">Window</span>
<span class="t " id="t21" style="left:225.1px;top:74.12px;font-size:15px;color:#eeeeee;letter-spacing:-0.084px;">Roof Slab</span>
<span class="t " id="t22" style="left:225.6px;top:105.12px;font-size:15px;color:#eeeeee;letter-spacing:-0.036px;">Stair</span>
<span class="t " id="t23" style="left:225.6px;top:136.23px;font-size:15px;color:#eeeeee;letter-spacing:-0.462px;">Space</span>
<span class="t " id="t24" style="left:345.0px;top:74.12px;font-size:15px;color:#eeeeee;letter-spacing:-0.301px;">Enhanced Custom Grid</span>
<span class="t " id="t25" style="left:345.0px;top:105.12px;font-size:15px;color:#eeeeee;letter-spacing:-0.007px;">Ceiling Grid</span>
<span class="t " id="t26" style="left:344.1px;top:136.23px;font-size:15px;color:#eeeeee;letter-spacing:-0.080px;">Box</span>
<span class="t " id="t27" style="left:247.3px;top:165.73px;font-size:15px;color:#eeeeee;letter-spacing:0.035px;">Build</span>
<span class="t " id="t28" style="left:537.1px;top:117.42px;font-size:15px;color:#eeeeee;letter-spacing:-0.220px;">Line</span>
<span class="t " id="t29" style="left:581.6px;top:165.73px;font-size:15px;color:#eeeeee;letter-spacing:0.061px;">Draw</span>
<span class="t " id="t30" style="left:695.1px;top:115.73px;font-size:15px;color:#eeeeee;letter-spacing:0.210px;">Match</span>
<span class="t " id="t31" style="left:682.1px;top:135.73px;font-size:15px;color:#eeeeee;letter-spacing:-0.075px;">Properties</span>
<span class="t " id="t32" style="left:752.1px;top:165.73px;font-size:15px;color:#eeeeee;letter-spacing:0.703px;">Modify</span>
<span class="t " id="t33" style="left:901.6px;top:165.73px;font-size:15px;color:#eeeeee;letter-spacing:0.317px;">View</span>
<span class="t " id="t34" style="left:949.1px;top:105.12px;font-size:15px;color:#eeeeee;letter-spacing:-0.355px;">Unsaved Layer State</span>
<span class="t " id="t35" style="left:1048.6px;top:135.93px;font-size:15px;color:#eeeeee;letter-spacing:-0.058px;">janelas</span>
<span class="t " id="t36" style="left:1047.1px;top:165.73px;font-size:15px;color:#eeeeee;letter-spacing:-0.666px;">Layers</span>
<span class="t " id="t37" style="left:1238.5px;top:62.89px;font-size:49.4px;color:#dcdcdc;">A</span>
<span class="t " id="t38" style="left:1226.1px;top:117.42px;font-size:15px;color:#eeeeee;letter-spacing:0.459px;">Multiline</span>
<span class="t " id="t39" style="left:1241.6px;top:137.43px;font-size:15px;color:#eeeeee;letter-spacing:0.228px;">Text</span>
<span class="t " id="t40" style="left:1254.6px;top:165.73px;font-size:15px;color:#eeeeee;letter-spacing:0.385px;">Annotation</span>
<span class="t " id="t41" style="left:1409.6px;top:117.42px;font-size:15px;color:#eeeeee;letter-spacing:-0.193px;">Measure</span>
<span class="t " id="t42" style="left:1419.6px;top:165.73px;font-size:15px;color:#eeeeee;letter-spacing:0.357px;">Utilities</span>
<span class="t " id="t43" style="left:1519.6px;top:116.02px;font-size:15px;color:#eeeeee;letter-spacing:0.071px;">Vertical</span>
<span class="t " id="t44" style="left:1519.6px;top:136.23px;font-size:15px;color:#eeeeee;letter-spacing:0.026px;">Section</span>
<span class="t " id="t45" style="left:1604.1px;top:74.33px;font-size:15px;color:#eeeeee;letter-spacing:0.116px;">Horizontal Section</span>
<span class="t " id="t46" style="left:1604.6px;top:105.22px;font-size:15px;color:#eeeeee;letter-spacing:-0.124px;">Section Line</span>
<span class="t " id="t47" style="left:1605.1px;top:136.03px;font-size:15px;color:#eeeeee;letter-spacing:-0.118px;">Elevation Line</span>
<span class="t " id="t48" style="left:1551.6px;top:165.73px;font-size:15px;color:#eeeeee;letter-spacing:0.062px;">Section &amp; Elevation</span>
<span class="t " id="t49" style="left:1766.1px;top:117.42px;font-size:15px;color:#eeeeee;letter-spacing:0.268px;">Detail</span>
<span class="t " id="t50" style="left:1743.6px;top:137.43px;font-size:15px;color:#eeeeee;letter-spacing:0.015px;">Components</span>
<span class="t " id="t51" style="left:1762.6px;top:165.73px;font-size:15px;color:#eeeeee;letter-spacing:0.223px;">Details</span>
<span class="t " id="t52" style="left:37.1px;top:195.93px;font-size:15px;color:#eeeeee;letter-spacing:0.003px;">Start</span>
<span class="t " id="t53" style="left:98.1px;top:195.93px;font-size:15px;color:#ffffff;font-weight:bold;letter-spacing:-0.360px;">conica*</span>
<span class="t " id="t54" style="left:10.6px;top:230.43px;font-size:15px;color:#e6e6e6;letter-spacing:0.122px;">[−][Custom View][Wireframe]</span>
<span class="t " id="t55" style="left:80.9px;top:286.40px;font-size:15px;color:#161616;font-family:'Liberation Mono',monospace;letter-spacing:0.060px;">Command:</span>
<span class="t " id="t56" style="left:80.9px;top:305.30px;font-size:15px;color:#161616;font-family:'Liberation Mono',monospace;letter-spacing:0.060px;">Command:</span>
<span class="t " id="t57" style="left:80.9px;top:324.20px;font-size:15px;color:#161616;font-family:'Liberation Mono',monospace;letter-spacing:0.060px;">Command:</span>
<span class="t " id="t58" style="left:80.9px;top:343.10px;font-size:15px;color:#161616;font-family:'Liberation Mono',monospace;letter-spacing:0.060px;">Command:</span>
<span class="t " id="t59" style="left:80.9px;top:362.00px;font-size:15px;color:#161616;font-family:'Liberation Mono',monospace;letter-spacing:0.060px;">Command:</span>
<span class="t " id="t60" style="left:122.9px;top:386.50px;font-size:15px;color:#6c6c6c;font-style:italic;font-family:'Liberation Mono',monospace;letter-spacing:0.100px;">Type a command</span>
<span class="t " id="t61" style="left:1804.1px;top:434.74px;font-size:13px;color:#6c7180;letter-spacing:-0.822px;">WCS</span>
<div class="abs" id="leftedge"></div><div class="abs" id="leftblue"></div><div class="abs" id="rightblue"></div>
</body></html>
